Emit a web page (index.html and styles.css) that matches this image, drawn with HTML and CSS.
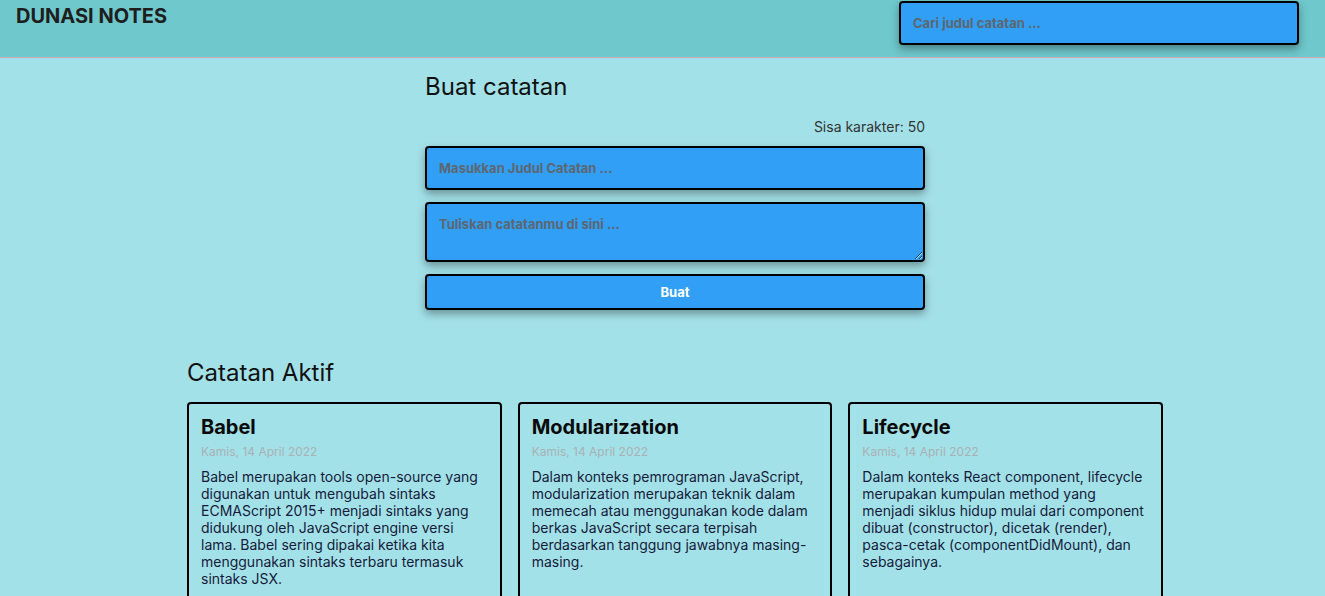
FILE: index.html
```html
<!DOCTYPE html>
<html lang="id">
<head>
<meta charset="utf-8">
<title>Dunasi Notes</title>
<link rel="stylesheet" href="styles.css">
</head>
<body>
<header class="app-header">
  <h1 class="brand">DUNASI NOTES</h1>
  <input class="search" type="text" placeholder="Cari judul catatan ...">
</header>
<main class="main">
  <section class="note-input">
    <h2 class="section-title">Buat catatan</h2>
    <p class="char-limit">Sisa karakter: 50</p>
    <form class="note-form">
      <input class="field" type="text" placeholder="Masukkan Judul Catatan ...">
      <textarea class="field field-body" placeholder="Tuliskan catatanmu di sini ..."></textarea>
      <button class="btn" type="button">Buat</button>
    </form>
  </section>
  <section class="notes">
    <h2 class="section-title">Catatan Aktif</h2>
    <div class="notes-list">
      <article class="note">
        <h3 class="note-title">Babel</h3>
        <p class="note-date">Kamis, 14 April 2022</p>
        <p class="note-body">Babel merupakan tools open-source yang digunakan untuk mengubah sintaks ECMAScript 2015+ menjadi sintaks yang didukung oleh JavaScript engine versi lama. Babel sering dipakai ketika kita menggunakan sintaks terbaru termasuk sintaks JSX.</p>
      </article>
      <article class="note">
        <h3 class="note-title">Modularization</h3>
        <p class="note-date">Kamis, 14 April 2022</p>
        <p class="note-body">Dalam konteks pemrograman JavaScript, modularization merupakan teknik dalam memecah atau menggunakan kode dalam berkas JavaScript secara terpisah berdasarkan tanggung jawabnya masing-masing.</p>
      </article>
      <article class="note">
        <h3 class="note-title">Lifecycle</h3>
        <p class="note-date">Kamis, 14 April 2022</p>
        <p class="note-body">Dalam konteks React component, lifecycle merupakan kumpulan method yang menjadi siklus hidup mulai dari component dibuat (constructor), dicetak (render), pasca-cetak (componentDidMount), dan sebagainya.</p>
      </article>
    </div>
  </section>
</main>
</body>
</html>
```
FILE: styles.css
```css
* { box-sizing: border-box; }

body {
  margin: 0;
  background: #a3e1e8;
  font-family: Inter, "Noto Sans", sans-serif;
  color: #1d1d1d;
}

.app-header {
  display: flex;
  justify-content: space-between;
  align-items: flex-start;
  height: 58px;
  padding: 0 26px 0 16px;
  background: #6fc8cc;
  border-bottom: 1px solid #cfa9b3;
}

.brand {
  margin: 4px 0 0;
  font-size: 20px;
  font-weight: 700;
  color: #1e1e1e;
}

.search {
  margin-top: 1px;
  width: 400px;
  height: 44px;
  padding: 0 12px;
  background: #309ff5;
  border: 2px solid #000;
  border-radius: 4px;
  box-shadow: 0 4px 8px rgba(0, 0, 0, 0.35);
  font-family: inherit;
  font-size: 13px;
  font-weight: 700;
  outline: none;
}

.search::placeholder,
.field::placeholder {
  color: #5e6670;
  font-weight: 700;
}

.main {
  padding-left: 25px;
  display: flex;
  flex-direction: column;
  align-items: center;
}

.note-input {
  width: 500px;
  margin-top: 14px;
}

.section-title {
  margin: 0;
  font-size: 24px;
  font-weight: 400;
  color: #111;
}

.char-limit {
  margin: 17px 0 11px;
  text-align: right;
  font-size: 14px;
  color: #333;
}

.note-form {
  display: flex;
  flex-direction: column;
  gap: 12px;
}

.field {
  display: block;
  width: 100%;
  height: 44px;
  padding: 0 12px;
  background: #309ff5;
  border: 2px solid #000;
  border-radius: 4px;
  box-shadow: 0 4px 8px rgba(0, 0, 0, 0.35);
  font-family: inherit;
  font-size: 13px;
  font-weight: 700;
  color: #111;
  outline: none;
}

.field-body {
  height: 60px;
  padding: 12px;
  resize: vertical;
}

.btn {
  height: 36px;
  background: #309ff5;
  border: 2px solid #000;
  border-radius: 4px;
  box-shadow: 0 4px 8px rgba(0, 0, 0, 0.35);
  font-family: inherit;
  font-size: 13px;
  font-weight: 700;
  color: #fff;
  cursor: pointer;
}

.notes {
  width: 976px;
  margin-top: 48px;
}

.notes-list {
  display: grid;
  grid-template-columns: repeat(3, 1fr);
  gap: 16px;
  margin-top: 15px;
}

.note {
  min-height: 240px;
  padding: 11px 12px 12px;
  border: 2px solid #000;
  border-radius: 4px;
}

.note-title {
  margin: 0 0 5px;
  font-size: 20px;
  font-weight: 700;
  color: #0a0a0a;
}

.note-date {
  margin: 0 0 9px;
  font-size: 12px;
  color: #a9b1b3;
}

.note-body {
  margin: 0;
  font-size: 14px;
  line-height: 17px;
  color: #161b3a;
}
```
